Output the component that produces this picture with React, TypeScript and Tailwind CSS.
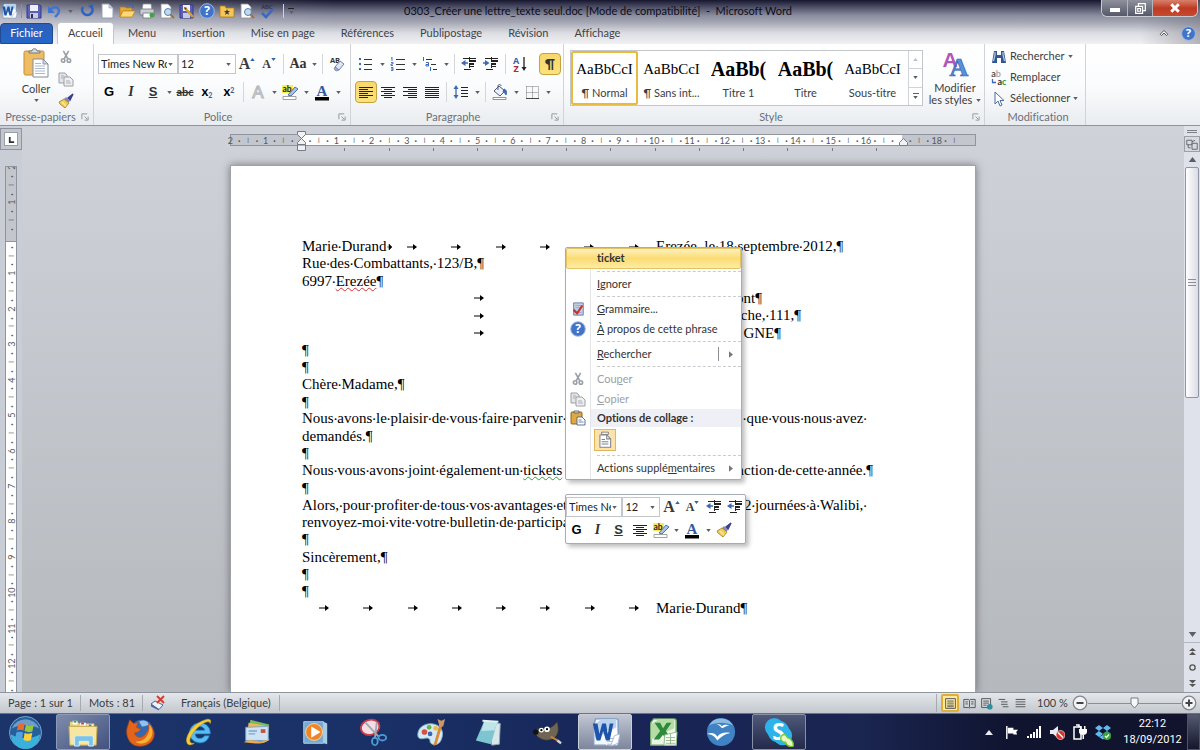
import React from "react";

type P = { children?: React.ReactNode; className?: string };

const Svg = ({ children, className = "size-4", vb = "0 0 16 16" }: P & { vb?: string }) => (
  <svg viewBox={vb} className={className + " shrink-0"} aria-hidden="true" fill="none">
    {children}
  </svg>
);

const Btn = ({ label, children, className = "w-[22px]" }: P & { label: string }) => (
  <button type="button" aria-label={label} title={label} className={"flex h-[22px] shrink-0 items-center justify-center " + className}>
    {children}
  </button>
);

const Caret = ({ className = "" }: P) => (
  <Svg vb="0 0 6 4" className={"h-[3px] w-[5px] " + className}>
    <path d="M0 0h6L3 4z" fill="#5b5f66" />
  </Svg>
);

const CaretBtn = ({ label }: { label: string }) => (
  <Btn label={label} className="w-[10px]">
    <Caret />
  </Btn>
);

const Sep = () => <span className="mx-[3px] h-5 w-px shrink-0 bg-[#d3d6da]" />;

/* ---------- icons ---------- */
const WordIcon = ({ className = "size-4" }: P) => (
  <Svg className={className} vb="0 0 32 32">
    <path d="M6 2h22a2 2 0 0 1 2 2v26H4V9z" fill="#f4f8fd" stroke="#7d9cc4" strokeWidth="1.5" />
    <path d="M4 9 12 2h16v9L4 24z" fill="#b9d2ee" />
    <path d="M17 14h12v16H17z" fill="#fff" />
    <path d="M18 23h9M18 26h9M18 29h7" stroke="#9ab4d6" />
    <path d="M3 7h5l2 11 3-11h4l2 11 2-11h4l-4 18h-4l-3-10-3 10H7z" fill="#1f55a8" />
    <path d="m26 20 6-2-2 10-8 3z" fill="#fff" stroke="#a7bad6" />
  </Svg>
);
const SaveIcon = () => (
  <Svg>
    <path d="M1 2h13l1 1v12H1z" fill="#5a5fb8" stroke="#34388a" />
    <path d="M4 2h8v6H4z" fill="#eef0fb" />
    <path d="M4 10h8v5H4z" fill="#c9cbd6" />
    <path d="M5 11h2v4H5z" fill="#2c2f66" />
  </Svg>
);
const UndoIcon = () => (
  <Svg>
    <path d="M2 3v7h7z" fill="#3f74cf" />
    <path d="M4 8c2-5 9-5 9 0 0 3-2 4-4 6" stroke="#3f74cf" strokeWidth="2.4" />
  </Svg>
);
const RedoIcon = () => (
  <Svg>
    <path d="M4 4a5.200 5.200 0 1 0 8-1" stroke="#2c62c4" strokeWidth="2.600" />
    <path d="M14 1v6L9 3z" fill="#2c62c4" />
  </Svg>
);
const DocIcon = () => (
  <Svg>
    <path d="M3 1h7l4 4v10H3z" fill="#fff" stroke="#8fa0b8" />
    <path d="M10 1v4h4z" fill="#c9d6e8" stroke="#8fa0b8" strokeWidth=".7" />
  </Svg>
);
const FolderIcon = () => (
  <Svg>
    <path d="M1 4h5l1 1h6v3H4l-3 6z" fill="#e3a93a" stroke="#b07a18" strokeWidth=".7" />
    <path d="M1 14 4 8h12l-3 6z" fill="#ffd876" stroke="#b98420" strokeWidth=".7" />
    <path d="M10 2c3-1 4 0 4 3" stroke="#3767b0" strokeWidth="1.200" />
  </Svg>
);
const PrintIcon = () => (
  <Svg>
    <path d="M4 1h8l1 6H3z" fill="#fff" stroke="#8a8f98" strokeWidth=".8" />
    <path d="M1 6h14v6H1z" fill="#c7ccd3" stroke="#6d737c" strokeWidth=".8" />
    <path d="M4 10h8v5H4z" fill="#fff" stroke="#6d737c" strokeWidth=".8" />
    <circle cx="13" cy="12" r="2.500" fill="#3fa53c" />
  </Svg>
);
const PreviewIcon = () => (
  <Svg>
    <path d="M2 1h7l3 3v11H2z" fill="#fff" stroke="#8a8f98" strokeWidth=".8" />
    <circle cx="9" cy="9" r="3.500" fill="#bcd9f5" stroke="#5f7fa8" />
    <path d="m11.500 11.500 3.500 3.500" stroke="#a9731f" strokeWidth="2" />
  </Svg>
);
const SaveEditIcon = () => (
  <Svg>
    <path d="M1 2h13v13H1z" fill="#5a5fb8" stroke="#34388a" />
    <path d="M4 2h7v6H4z" fill="#eef0fb" />
    <path d="M4 10h7v5H4z" fill="#c9cbd6" />
    <path d="m6 5 8 9" stroke="#d7a031" strokeWidth="2.500" />
    <path d="m5 4 3 1-2 2z" fill="#6d3d10" />
  </Svg>
);
const HelpIcon = ({ className = "size-4" }: P) => (
  <Svg className={className}>
    <circle cx="8" cy="8" r="7.300" fill="#3f74c8" stroke="#9db9e6" />
    <text x="8" y="12.200" fontSize="12" fontWeight="700" textAnchor="middle" fill="#fff" fontFamily="Open Sans, sans-serif">?</text>
  </Svg>
);
const FavFolderIcon = () => (
  <Svg>
    <path d="M1 3h5l1 2h8v9H1z" fill="#f4c65a" stroke="#b07a18" strokeWidth=".8" />
    <path d="m8 6 .8 2H11l-1.700 1.400L10 12l-2-1.500L6 12l.7-2.600L5 8h2.200z" fill="#3a3a3a" />
  </Svg>
);
const SpellIcon = () => (
  <Svg>
    <text x="8" y="6" fontSize="6" fontWeight="600" textAnchor="middle" fill="#2a2f45" fontFamily="Open Sans, sans-serif">ABC</text>
    <path d="m3 10 4 4 7-8" stroke="#3b68c6" strokeWidth="2.600" />
  </Svg>
);
const PasteBig = () => (
  <Svg vb="0 0 26 30" className="h-[30px] w-[26px]">
    <rect x="1" y="3" width="20" height="24" rx="1.500" fill="#f0bc62" stroke="#c18d3a" />
    <path d="M6 5V3h3c0-3 5-3 5 0h3v2z" fill="#d7dade" stroke="#6a6f77" strokeWidth=".9" />
    <path d="M10 11h10l5 5v13H10z" fill="#fff" stroke="#7f8c9f" />
    <path d="M20 11v5h5z" fill="#c9d5e6" stroke="#7f8c9f" strokeWidth=".8" />
    <path d="M12 18h10M12 20.500h10M12 23h10M12 25.500h10M12 15.500h6" stroke="#9fb0c8" strokeWidth=".9" />
  </Svg>
);
const PasteIcon = () => (
  <Svg>
    <rect x="1" y="2" width="11" height="12" rx="1" fill="#e0a83e" stroke="#7d5c1b" strokeWidth=".9" />
    <path d="M4 3V1h5v2z" fill="#d7dade" stroke="#555" strokeWidth=".8" />
    <path d="M7 7h5l3 3v5H7z" fill="#fff" stroke="#4d6590" strokeWidth=".9" />
    <path d="M8.500 10h3M8.500 12h5" stroke="#5878b0" strokeWidth=".9" />
  </Svg>
);
const PasteText = () => (
  <Svg className="size-[18px]">
    <path d="M5 3V1h6v2z" fill="#fff" stroke="#777" strokeWidth=".8" />
    <path d="M3.500 3.500h6l3.500 3.500v7.500H3.500z" fill="#fff" stroke="#7b8290" strokeWidth=".9" />
    <path d="M9.500 3.500V7H13" stroke="#7b8290" strokeWidth=".9" />
    <path d="M5 7.500h3M5 9.500h6M5 11.500h6" stroke="#7b8290" strokeWidth=".9" />
  </Svg>
);
const ScissorsIcon = () => (
  <Svg className="size-[14px]">
    <path d="m5 1 5 9M11 1 6 10" stroke="#9a9fa6" strokeWidth="1.800" />
    <circle cx="4.700" cy="12" r="2" stroke="#9a9fa6" strokeWidth="1.800" />
    <circle cx="11.300" cy="12" r="2" stroke="#9a9fa6" strokeWidth="1.800" />
  </Svg>
);
const CopyIcon = () => (
  <Svg>
    <path d="M1 2h6l2 2v8H1z" fill="#e4e5e8" stroke="#9b9fa6" />
    <path d="M6 6h6l3 3v6H6z" fill="#f0f0f2" stroke="#9b9fa6" />
    <path d="M3 5h3M3 7h2M8 10h4M8 12h5" stroke="#a9acb2" />
  </Svg>
);
const BrushIcon = () => (
  <Svg>
    <path d="m15 1-5 4 2 2z" fill="#3c3f8c" stroke="#3c3f8c" strokeWidth="1.500" />
    <path d="m8 4 4 4-2 2-4-4z" fill="#8489c4" />
    <path d="M6 6 1 9l1 2 5 4 4-5z" fill="#f2cc57" stroke="#a47a1c" strokeWidth=".8" />
    <path d="m4 9 4 4" stroke="#fbeaa8" strokeWidth="1.500" />
  </Svg>
);
const Letter = ({ t, up, className = "" }: { t: string; up: boolean; className?: string }) => (
  <span className="flex items-center font-['Liberation_Serif',serif] font-bold text-[#3a3a3a]">
    <span className={className}>{t}</span>
    <Svg vb="0 0 6 4" className="mb-2.5 h-[3px] w-[5px]">
      <path d={up ? "M0 4h6L3 0z" : "M0 0h6L3 4z"} fill="#3b62a8" />
    </Svg>
  </span>
);
const EraseIcon = () => (
  <Svg>
    <text x="6" y="7" fontSize="7.500" fontWeight="700" textAnchor="middle" fill="#333" fontFamily="Open Sans, sans-serif">AB</text>
    <path d="m6 11 5-6 4 3-5 6z" fill="#dfe6f2" stroke="#6e83ad" />
    <path d="m6 11 4 3-3 1-2-2z" fill="#9cb0d8" stroke="#6e83ad" strokeWidth=".8" />
  </Svg>
);
const HighlightIcon = () => (
  <Svg vb="0 0 18 17" className="h-[17px] w-[18px]">
    <path d="M1 1h11v8H1z" fill="#f5ee55" />
    <text x="6" y="8" fontSize="8.500" fontWeight="700" textAnchor="middle" fill="#222" fontFamily="Lato, sans-serif">ab</text>
    <path d="m7 11 7-8 3 2-7 7z" fill="#a9c2e8" stroke="#4467a5" strokeWidth=".9" />
    <path d="M2 12.500h13v3H2z" fill="#fff" stroke="#8d8d8d" strokeWidth=".8" />
  </Svg>
);
const FontColorIcon = () => (
  <Svg vb="0 0 16 17" className="h-[17px] w-4">
    <text x="8" y="11.500" fontSize="15" fontWeight="700" textAnchor="middle" fill="#35599c" fontFamily="Liberation Serif, serif">A</text>
    <path d="M1 13h14v3.500H1z" fill="#000" />
  </Svg>
);
const BulletsIcon = () => (
  <Svg>
    <path d="M1 3h2M1 8h2M1 13h2" stroke="#3b68b8" strokeWidth="2" />
    <path d="M6 3.500h8M6 8.500h8M6 13.500h8" stroke="#333" />
  </Svg>
);
const NumbersIcon = () => (
  <Svg>
    <path d="M2 1v4M1 2h1M1 6.500h2v1.500H1V9.500h2M1 11.500h2v3H1M1 13h2" stroke="#3b68b8" strokeWidth=".9" />
    <path d="M6 3.500h9M6 8.500h9M6 13.500h9" stroke="#333" />
  </Svg>
);
const MultiIcon = () => (
  <Svg>
    <path d="M1.500 1v4M4 6.500h2.500V10H4V8.500h2M8.500 11v4" stroke="#3b68b8" />
    <path d="M4 3.500h6M9 8.500h5M11 13.500h4" stroke="#333" />
  </Svg>
);
const IndentIcon = ({ out }: { out?: boolean }) => (
  <Svg>
    <path d="M2 2.500h13M8 10.500h5M3 13.500h7" stroke="#222" />
    <path d="M8.500 1v14" stroke="#222" strokeDasharray="1 1" />
    <path d="M8 5h7M8 8h5" stroke="#222" strokeWidth="2" />
    <path d={out ? "M4.500 4v6L0 7z" : "M2 4v6l4.500-3z"} fill="#3b68b8" />
    <path d={out ? "M3 7h4" : "M0 7h3"} stroke="#3b68b8" strokeWidth="1.500" />
  </Svg>
);
const SortIcon = () => (
  <Svg>
    <text x="4" y="7.500" fontSize="9" fontWeight="700" textAnchor="middle" fill="#3b62b0" fontFamily="Open Sans, sans-serif">A</text>
    <text x="4" y="15.500" fontSize="9" fontWeight="700" textAnchor="middle" fill="#a33030" fontFamily="Open Sans, sans-serif">Z</text>
    <path d="M12 1v11" stroke="#222" strokeWidth="1.300" />
    <path d="M9.500 11h5L12 15z" fill="#222" />
  </Svg>
);
const AlignIcon = ({ d }: { d: string }) => (
  <Svg>
    <path d={d} stroke="#222" strokeWidth="1.200" />
  </Svg>
);
const AL = "M1 3.500h14M1 5.500h9M1 7.500h14M1 9.500h9M1 11.500h14M1 13.500h9";
const AC = "M1 3.500h14M4 5.500h8M1 7.500h14M4 9.500h8M1 11.500h14M4 13.500h8";
const AR = "M1 3.500h14M6 5.500h9M1 7.500h14M6 9.500h9M1 11.500h14M6 13.500h9";
const AJ = "M1 3.500h14M1 5.500h14M1 7.500h14M1 9.500h14M1 11.500h14M1 13.500h14";
const SpacingIcon = () => (
  <Svg>
    <path d="M3 1 .5 5h5zM3 15 .5 11h5z" fill="#3b68b8" />
    <path d="M3 4v8" stroke="#3b68b8" strokeWidth="1.300" />
    <path d="M8 3.500h7M8 6.500h7M8 9.500h7M8 12.500h7" stroke="#222" />
  </Svg>
);
const BucketIcon = () => (
  <Svg>
    <path d="m2 7 5-5 6 5-5 5z" fill="#eef2f8" stroke="#4b5a78" />
    <path d="M6 6V2c0-2 3-2 3 0" stroke="#4b5a78" />
    <path d="M12 5c3 1 3 4 2 6-1-2-2-3-3-3z" fill="#3b68b8" stroke="#3b68b8" />
    <path d="M1 13.500h13v2H1z" fill="#fff" stroke="#777" strokeWidth=".8" />
  </Svg>
);
const BorderIcon = () => (
  <Svg>
    <path d="M2.500 2.500h12v11M2.500 2.500v11M8.500 2.500v11M2.500 8.500h12" stroke="#777" strokeDasharray="1 1" />
    <path d="M2 14.500h13" stroke="#444" />
  </Svg>
);
const StylesIcon = () => (
  <Svg vb="0 0 28 28" className="size-7">
    <text x="9" y="17" fontSize="21" fontWeight="700" textAnchor="middle" fill="#b057b8" fontFamily="Liberation Sans, sans-serif">A</text>
    <text x="18" y="26" fontSize="26" fontWeight="700" textAnchor="middle" fill="#5a92da" stroke="#2f62ae" strokeWidth=".7" fontFamily="Liberation Serif, serif">A</text>
  </Svg>
);
const BinocularsIcon = () => (
  <Svg>
    <path d="M3 2h3v4h4V2h3l2 12h-5V9H6v5H1z" fill="#33558f" />
    <path d="M4 3v3L2.500 12M12 3v3l1.500 6" stroke="#b4cbea" strokeWidth="1.200" />
  </Svg>
);
const ReplaceIcon = () => (
  <Svg>
    <text x="5" y="7" fontSize="9" fontWeight="700" textAnchor="middle" fill="#555" fontFamily="Lato, sans-serif">a<tspan fill="#aaa">b</tspan></text>
    <text x="11" y="15" fontSize="9" fontWeight="700" textAnchor="middle" fill="#333" fontFamily="Lato, sans-serif">a<tspan fill="#2e9a3b">c</tspan></text>
    <path d="M1.500 9v3.500H5" stroke="#3b68b8" strokeWidth="1.300" />
  </Svg>
);
const CursorIcon = () => (
  <Svg>
    <path d="M4 1v12l3-3 2 5 2-1-2-4.500h4z" fill="#fff" stroke="#4c6da4" />
  </Svg>
);
const GrammarIcon = () => (
  <Svg className="size-[14px]">
    <path d="M3 1h11v14H3z" fill="#c3cfe4" stroke="#5b78a8" />
    <path d="M5 4h7M5 6.500h7M5 12h7" stroke="#8ea6cc" />
    <path d="m3 9 4 4 6-9" stroke="#c9352c" strokeWidth="2.500" />
  </Svg>
);
const ProofIcon = () => (
  <Svg>
    <path d="M1 9 5 6l8 4-4 4.500z" fill="#eef2fa" stroke="#4467a5" />
    <path d="m1 9v2.500l8 4v-1z" fill="#4467a5" />
    <path d="m7 1 7 7M14 1 7 8" stroke="#d43a2b" strokeWidth="1.800" />
  </Svg>
);

/* ---------- shared controls ---------- */
const Combo = ({ label, value, className }: { label: string; value: string; className: string }) => (
  <label className={"relative flex h-5 items-center overflow-hidden border border-[#c3c7cd] bg-white " + className}>
    <span className="sr-only">{label}</span>
    <select defaultValue={value} className="w-full appearance-none whitespace-nowrap bg-transparent pr-2.5 pl-0.5 text-[11px] leading-4 text-[#222] outline-none">
      <option>{value}</option>
    </select>
    <Caret className="pointer-events-none absolute right-1" />
  </label>
);

const Group = ({ label, children, className = "", launcher = true }: P & { label: string; launcher?: boolean }) => (
  <section aria-label={label} className={"flex shrink-0 flex-col border-r border-[#d0d4d9] " + className}>
    <div className="flex h-[65px] gap-1">{children}</div>
    <div className="flex h-4 items-center">
      <span className="flex-1 text-center text-[#6b7079]">{label}</span>
      {launcher && (
        <button type="button" aria-label={"Options " + label} className="mr-1">
          <Svg vb="0 0 9 9" className="size-2">
            <path d="M1 7V1h6M4 4l3 3M8 4v4H4" stroke="#8a8f97" />
          </Svg>
        </button>
      )}
    </div>
  </section>
);

const GText = () => <b className="font-['Liberation_Sans',sans-serif] text-[13px] font-black text-black">G</b>;
const IText = () => <i className="font-['Liberation_Serif',serif] text-sm font-bold text-[#333]">I</i>;
const SText = () => <u className="font-['Liberation_Sans',sans-serif] text-[13px] font-bold text-[#333]">S</u>;

const styles: [string, string, string][] = [
  ["AaBbCcI", "¶ Normal", "text-[15px]"],
  ["AaBbCcI", "¶ Sans int...", "text-[15px]"],
  ["AaBb(", "Titre 1", "text-xl font-bold"],
  ["AaBb(", "Titre", "text-xl font-bold"],
  ["AaBbCcI", "Sous-titre", "text-[15px]"],
];

const Ribbon = () => (
  <div className="flex h-[82px] shrink-0 overflow-hidden border-b border-[#8f959e] bg-linear-to-b from-white via-[#fbfcfd] to-[#e9ecf0]">
    <Group label="Presse-papiers" className="w-[94px]">
      <button type="button" className="ml-3 flex w-12 flex-col items-center pt-1">
        <PasteBig />
        <span className="mt-[3px] leading-4">Coller</span>
        <Caret className="mt-0.5" />
      </button>
      <div className="flex flex-col pt-0.5">
        <Btn label="Couper" className="w-1"><ScissorsIcon /></Btn>
        <Btn label="Copier" className="w-1"><CopyIcon /></Btn>
        <Btn label="Reproduire la mise en forme" className="w-1"><BrushIcon /></Btn>
      </div>
    </Group>

    <Group label="Police" className="w-[257px] pl-1">
      <div className="flex flex-col gap-1.5 pt-[9px]">
        <div className="flex h-[22px] items-center">
          <Combo label="Police" value="Times New Roman" className="w-20" />
          <Combo label="Taille" value="12" className="w-[58px]" />
          <Btn label="Agrandir"><Letter t="A" up className="text-base" /></Btn>
          <Btn label="Réduire"><Letter t="A" up={false} className="text-xs" /></Btn>
          <Sep />
          <Btn label="Modifier la casse"><b className="font-['Liberation_Serif',serif] text-sm text-[#333]">Aa</b></Btn>
          <CaretBtn label="Options de casse" />
          <Sep />
          <Btn label="Effacer la mise en forme"><EraseIcon /></Btn>
        </div>
        <div className="flex h-[22px] items-center">
          <Btn label="Gras"><GText /></Btn>
          <Btn label="Italique"><IText /></Btn>
          <Btn label="Souligné"><SText /></Btn>
          <CaretBtn label="Options de soulignement" />
          <Btn label="Barré"><s className="text-[11px] font-bold text-[#333]">abc</s></Btn>
          <Btn label="Indice"><b className="text-[13px] text-black">x<sub className="text-[7px] text-[#35599c]">2</sub></b></Btn>
          <Btn label="Exposant"><b className="text-[13px] text-black">x<sup className="text-[7px] text-[#35599c]">2</sup></b></Btn>
          <Sep />
          <Btn label="Effets de texte">
            <Svg><text x="8" y="14" fontSize="17" textAnchor="middle" fill="#eee" stroke="#b3b6bb" fontFamily="Liberation Sans, sans-serif">A</text></Svg>
          </Btn>
          <CaretBtn label="Options d'effets" />
          <Btn label="Surlignage"><HighlightIcon /></Btn>
          <CaretBtn label="Couleurs de surlignage" />
          <Btn label="Couleur de police"><FontColorIcon /></Btn>
          <CaretBtn label="Couleurs de police" />
        </div>
      </div>
    </Group>

    <Group label="Paragraphe" className="w-[213px] pl-1">
      <div className="flex flex-col gap-1.5 pt-[9px]">
        <div className="flex h-[22px] items-center">
          <Btn label="Puces"><BulletsIcon /></Btn>
          <CaretBtn label="Options de puces" />
          <Btn label="Numérotation"><NumbersIcon /></Btn>
          <CaretBtn label="Options de numérotation" />
          <Btn label="Liste à plusieurs niveaux"><MultiIcon /></Btn>
          <CaretBtn label="Options de liste" />
          <Sep />
          <Btn label="Diminuer le retrait"><IndentIcon out /></Btn>
          <Btn label="Augmenter le retrait"><IndentIcon /></Btn>
          <Sep />
          <Btn label="Trier"><SortIcon /></Btn>
          <Btn label="Afficher tout" className="ml-2 w-[22px] rounded-sm border border-[#c9a13b] bg-linear-to-b from-[#f8d66c] to-[#fbe37c]">
            <b className="text-sm leading-none text-[#333]">¶</b>
          </Btn>
        </div>
        <div className="flex h-[22px] items-center">
          <Btn label="Aligner à gauche" className="w-[22px] rounded-sm border border-[#c9a13b] bg-linear-to-b from-[#f8d66c] to-[#fbe37c]"><AlignIcon d={AL} /></Btn>
          <Btn label="Centrer"><AlignIcon d={AC} /></Btn>
          <Btn label="Aligner à droite"><AlignIcon d={AR} /></Btn>
          <Btn label="Justifier"><AlignIcon d={AJ} /></Btn>
          <Sep />
          <Btn label="Interligne"><SpacingIcon /></Btn>
          <CaretBtn label="Options d'interligne" />
          <Sep />
          <Btn label="Trame de fond"><BucketIcon /></Btn>
          <CaretBtn label="Couleurs de trame" />
          <Btn label="Bordures"><BorderIcon /></Btn>
          <CaretBtn label="Options de bordures" />
        </div>
      </div>
    </Group>

    <Group label="Style" className="w-[421px] pl-1.5">
      <div className="mt-1.5 flex h-14 border border-[#c3c7cd] bg-white">
        {styles.map(([sample, name, size], i) => (
          <button
            key={name}
            type="button"
            className={
              "flex w-[67px] flex-col items-center overflow-hidden border-2 whitespace-nowrap " +
              (i === 0 ? "rounded-xs border-[#e8bb3c]" : "border-transparent")
            }
          >
            <span className={"h-8 max-w-[58px] overflow-hidden font-['Liberation_Serif',serif] leading-8 text-black " + size}>{sample}</span>
            <span className="leading-4">{name}</span>
          </button>
        ))}
        <div className="ml-0.5 flex w-3.5 flex-col border-l border-[#d0d4d9]">
          <button type="button" aria-label="Styles précédents" className="flex flex-1 items-center justify-center"><Caret className="rotate-180 opacity-40" /></button>
          <button type="button" aria-label="Styles suivants" className="flex flex-1 items-center justify-center border-y border-[#d0d4d9]"><Caret /></button>
          <button type="button" aria-label="Tous les styles" className="flex flex-1 flex-col items-center justify-center gap-0.5"><span className="h-px w-[6px] bg-[#5b5f66]" /><Caret /></button>
        </div>
      </div>
      <button type="button" className="flex w-14 flex-col items-center pt-1.5 leading-3">
        <StylesIcon />
        <span className="mt-1">Modifier</span>
        <span className="flex items-center gap-1 whitespace-nowrap">les styles <Caret /></span>
      </button>
    </Group>

    <Group label="Modification" launcher={false} className="w-[101px] pl-1.5">
      <div className="flex flex-col pt-0.5">
        {[
          { n: "Rechercher", i: <BinocularsIcon />, c: true },
          { n: "Remplacer", i: <ReplaceIcon />, c: false },
          { n: "Sélectionner", i: <CursorIcon />, c: true },
        ].map((r) => (
          <button key={r.n} type="button" className="flex h-[21px] items-center gap-[3px] whitespace-nowrap">
            {r.i}
            <span>{r.n}</span>
            {r.c && <Caret />}
          </button>
        ))}
      </div>
    </Group>
  </div>
);

const QuickAccess = () => (
  <div className="flex w-[404px] shrink-0 items-center gap-1 pl-px">
    <WordIcon />
    <span className="h-3.5 w-px bg-[#8b90a0]" />
    <button type="button" aria-label="Enregistrer"><SaveIcon /></button>
    <button type="button" aria-label="Annuler" className="flex items-center gap-1.5"><UndoIcon /><Caret className="mr-0.5" /></button>
    <button type="button" aria-label="Rétablir"><RedoIcon /></button>
    <button type="button" aria-label="Nouveau"><DocIcon /></button>
    <button type="button" aria-label="Ouvrir"><FolderIcon /></button>
    <button type="button" aria-label="Impression rapide"><PrintIcon /></button>
    <button type="button" aria-label="Aperçu"><PreviewIcon /></button>
    <button type="button" aria-label="Enregistrer sous"><SaveEditIcon /></button>
    <button type="button" aria-label="Aide"><HelpIcon /></button>
    <button type="button" aria-label="Favoris"><FavFolderIcon /></button>
    <button type="button" aria-label="Aperçu avant impression"><PreviewIcon /></button>
    <button type="button" aria-label="Grammaire et orthographe"><SpellIcon /></button>
    <span className="ml-1 h-3.5 w-px bg-[#cfd3dc]" />
    <span className="flex flex-col items-center gap-0.5"><span className="h-px w-[6px] bg-[#222]" /><Caret /></span>
  </div>
);

const tabs = ["Menu", "Insertion", "Mise en page", "Références", "Publipostage", "Révision", "Affichage"];

const Header = () => (
  <header className="shrink-0 bg-[linear-gradient(to_right,rgba(255,255,255,.32),rgba(255,255,255,0)_28%,rgba(255,255,255,0)_95%,rgba(120,120,130,.5)),linear-gradient(to_bottom,#17172f_0%,#4d4f66_16%,#8c8ea1_36%,#a3a5b2_50%,#dcdde2_75%,#f1f1f4_100%)]">
    <div className="flex h-[22px] items-center">
      <QuickAccess />
      <h1 className="whitespace-nowrap text-[11px] text-[#0d0d18]">0303_Créer une lettre_texte seul.doc [Mode de compatibilité]&nbsp; - &nbsp;Microsoft Word</h1>
      <div className="mr-0.5 ml-auto flex h-[17px] self-start overflow-hidden rounded-b-md border border-t-0 border-[#c9cbd2]">
        <button type="button" aria-label="Réduire" className="flex w-[26px] items-center justify-center border-r border-[#b2b4be] bg-linear-to-b from-[#8f919c] to-[#55586a]">
          <span className="mt-1 h-1 w-2.5 bg-white" />
        </button>
        <button type="button" aria-label="Restaurer" className="flex w-[25px] items-center justify-center border-r border-[#b2b4be] bg-linear-to-b from-[#8f919c] to-[#55586a]">
          <Svg className="size-[11px]"><path d="M5 4V1h10v10h-3M1 5h10v10H1zM4 8h4v4H4z" stroke="#fff" strokeWidth="1.800" /></Svg>
        </button>
        <button type="button" aria-label="Fermer" className="flex w-11 items-center justify-center bg-linear-to-b from-[#d9806c] via-[#bd3a22] to-[#c84a30]">
          <Svg className="size-3"><path d="m3 3 10 10M13 3 3 13" stroke="#fff" strokeWidth="4" /></Svg>
        </button>
      </div>
    </div>
    <nav className="flex h-[22px] items-end text-[#3f434b]">
      <button type="button" className="h-[21px] w-[53px] rounded-t-sm border border-[#1f4a94] bg-linear-to-b from-[#2b5fb8] to-[#2467c9] text-white">Fichier</button>
      <button type="button" className="ml-1 h-[22px] w-[57px] rounded-t-sm border border-b-0 border-[#c3c6cc] bg-white">Accueil</button>
      <div className="ml-[14px] flex h-[22px] gap-[26px]">
        {tabs.map((t) => (
          <button key={t} type="button" className="whitespace-nowrap">{t}</button>
        ))}
      </div>
      <div className="mr-1 ml-auto flex items-center gap-3 self-center">
        <button type="button" aria-label="Réduire le ruban">
          <Svg className="size-2.5"><path d="m2 10 6-6 6 6-2 2-4-4-4 4z" fill="#fff" stroke="#44474f" strokeWidth="1.500" /></Svg>
        </button>
        <button type="button" aria-label="Aide Word"><HelpIcon className="size-[15px]" /></button>
      </div>
    </nav>
  </header>
);

/* ---------- rulers ---------- */
const mark = (i: number, zero: number, hidden: number[]) => {
  if (i % 4 === 0) {
    const n = Math.abs(i / 4 - zero);
    return hidden.includes(i / 4) ? "" : String(n);
  }
  return i % 4 === 2 ? "|" : "·";
};
const Slot = ({ t, v }: { t: string; v?: boolean }) => (
  <span className={"flex min-h-0 min-w-0 flex-1 items-center justify-center leading-none " + (v ? "[writing-mode:vertical-rl] rotate-180 " : "") + (t === "|" ? "text-[6px] font-bold" : t === "·" ? "text-[9px] font-bold" : "text-[9px]")}>
    {t}
  </span>
);
const HRuler = () => (
  <div className="relative mx-auto w-[746px] text-[#55585e]">
    <div className="h-3 border border-[#8f959e] bg-[linear-gradient(to_right,#c3c7cd_9.6%,#fff_9.6%,#fff_90.2%,#c3c7cd_90.2%)]">
      <div className="-mr-0.5 -ml-[5px] flex h-full">
        {Array.from({ length: 85 }, (_, i) => (
          <Slot key={i} t={i > 82 ? "" : mark(i, 2, [2, 19])} />
        ))}
      </div>
    </div>
    <div className="mt-0.5 ml-[71px] flex h-[3px] w-[576px]">
      {Array.from({ length: 13 }, (_, i) => (
        <span key={i} className="flex-1 border-r border-[#777b82]" />
      ))}
    </div>
    <Svg vb="0 0 9 20" className="absolute -top-[3px] left-[67px] h-5 w-[9px]">
      <path d="M.5.500h8v3l-4 4-4-4zM4.500 7.500l4 4v2h-8v-2zM.5 14h8v5.500h-8z" fill="#f1f2f4" stroke="#777b82" />
    </Svg>
    <Svg vb="0 0 9 8" className="absolute top-[4px] left-[669px] h-2 w-[9px]">
      <path d="m4.500.500 4 4v3h-8v-3z" fill="#f1f2f4" stroke="#777b82" />
    </Svg>
  </div>
);
const VRuler = () => (
  <div className="h-[540px] w-3 overflow-hidden border border-[#8f959e] bg-[linear-gradient(to_bottom,#c3c7cd_74px,#8f959e_74px,#8f959e_75px,#fff_75px)] text-[#55585e]">
    <div className="-mt-1 flex h-[540px] flex-col">
      {Array.from({ length: 61 }, (_, i) => (
        <Slot key={i} v t={mark(i, 2, [2])} />
      ))}
    </div>
  </div>
);

/* ---------- letter ---------- */
const T = ({ s }: { s: string }) => (
  <span>
    {s.split(/(·)/).map((part, i) => (part === "·" ? <span key={i} className="text-[11px] font-bold">·</span> : part))}
  </span>
);
const Arrow = () => (
  <span className="flex flex-1 items-center justify-center">
    <Svg vb="0 0 10 6" className="h-[6px] w-2.5">
      <path d="M0 3h7" stroke="#000" />
      <path d="M6 0v6l4-3z" fill="#000" />
    </Svg>
  </span>
);
const Line = ({ children, className = "" }: P) => <p className={"flex min-h-0 items-center whitespace-pre " + className}>{children}</p>;
const Blank = () => <Line>¶</Line>;

const Letterbody = () => (
  <div className="grid h-[379px] auto-rows-fr font-['Liberation_Serif',serif] text-[15px] leading-4 text-black">
    <Line>
      <span className="flex w-[354px] items-center">
        <span className="flex w-[88px] items-center">
          <T s="Marie·Durand" />
          <Svg vb="0 0 5 6" className="h-[6px] w-[5px]"><path d="M0 3h2M2 0l3 3-3 3z" fill="#000" stroke="#000" strokeWidth=".5" /></Svg>
        </span>
        {Array.from({ length: 6 }, (_, i) => <Arrow key={i} />)}
      </span>
      <T s="Erezée, le·18·septembre·2012,¶" />
    </Line>
    <Line><T s="Rue·des·Combattants,·123/B,¶" /></Line>
    <Line><T s="6997·" /><span className="underline decoration-[#d03030] decoration-wavy decoration-1 underline-offset-1">Erezée</span>¶</Line>
    <Line className="w-[460px]"><span className="flex w-[354px]"><Arrow /></span><span className="ml-auto">ont¶</span></Line>
    <Line className="w-[499px]"><span className="flex w-[354px]"><Arrow /></span><span className="ml-auto"><T s="che,·111,¶" /></span></Line>
    <Line className="w-[479px]"><span className="flex w-[354px]"><Arrow /></span><span className="ml-auto">GNE¶</span></Line>
    <Blank />
    <Blank />
    <Line><T s="Chère·Madame,¶" /></Line>
    <Blank />
    <Line className="w-[565px] justify-between"><T s="Nous·avons·le·plaisir·de·vous·faire·parvenir·" /><T s="·que·vous·nous·avez·" /></Line>
    <Line>demandés.¶</Line>
    <Blank />
    <Line className="w-[571px] justify-between">
      <span><T s="Nous·vous·avons·joint·également·un·" /><span className="underline decoration-[#2f9a3b] decoration-wavy decoration-1 underline-offset-1">tickets</span></span>
      <T s="action·de·cette·année.¶" />
    </Line>
    <Blank />
    <Line className="w-[565px] justify-between"><T s="Alors,·pour·profiter·de·tous·vos·avantages·et" /><T s="2·journées·à·Walibi,·" /></Line>
    <Line><T s="renvoyez-moi·vite·votre·bulletin·de·participa" /></Line>
    <Blank />
    <Line>Sincèrement,¶</Line>
    <Blank />
    <Blank />
    <Line>
      <span className="flex w-[354px]">{Array.from({ length: 8 }, (_, i) => <Arrow key={i} />)}</span>
      <T s="Marie·Durand¶" />
    </Line>
  </div>
);

/* ---------- context menu ---------- */
const Item = ({ icon, children, className = "text-[#333]" }: P & { icon?: React.ReactNode }) => (
  <button type="button" role="menuitem" className={"flex h-5 w-full items-center text-left whitespace-nowrap " + className}>
    <span className="flex w-6 shrink-0 justify-center">{icon}</span>
    <span className="flex flex-1 items-center pl-[7px]">{children}</span>
  </button>
);
const MenuSep = () => <div className="ml-[31px] flex h-[5px] items-center"><span className="w-full border-t border-dashed border-[#c9cbd0]" /></div>;
const Right = () => <Svg vb="0 0 5 8" className="mr-2 ml-auto h-[7px] w-1"><path d="M0 0v8l5-4z" fill="#777" /></Svg>;

const ContextMenu = () => (
  <div role="menu" className="absolute top-[81px] left-[334px] w-[177px] rounded-xs border border-[#a7abb3] bg-[linear-gradient(to_right,#fff_24px,#e2e4e8_24px,#e2e4e8_25px,#fff_25px)] pb-px text-[11px] shadow-[3px_3px_4px_rgba(0,0,0,.25)]">
    <button type="button" role="menuitem" className="flex h-[21px] w-full items-center rounded-xs border border-[#e5c365] bg-linear-to-b from-[#fdf0b8] via-[#fbdc74] to-[#fdeca4] pl-[30px] text-left font-bold text-[#333]">ticket</button>
    <MenuSep />
    <Item><span><u>I</u>gnorer</span></Item>
    <MenuSep />
    <Item icon={<GrammarIcon />}><span><u>G</u>rammaire...</span></Item>
    <Item icon={<HelpIcon />}><span><u>À</u> propos de cette phrase</span></Item>
    <MenuSep />
    <Item><span><u>R</u>echercher</span><span className="ml-auto h-3.5 w-px bg-[#8a8d94]" /><span className="flex w-[22px]"><Right /></span></Item>
    <MenuSep />
    <Item className="text-[#9c9fa5]" icon={<ScissorsIcon />}><span>Cou<u>p</u>er</span></Item>
    <Item className="text-[#9c9fa5]" icon={<CopyIcon />}><span><u>C</u>opier</span></Item>
    <div className="flex h-[18px] items-center">
      <span className="flex w-6 justify-center"><PasteIcon /></span>
      <span className="ml-px flex h-full flex-1 items-center bg-[#eff0f5] pl-[6px] font-bold text-[#333]">Options de collage :</span>
    </div>
    <div className="flex h-[26px] items-center pl-7">
      <button type="button" aria-label="Conserver uniquement le texte" className="flex size-[22px] items-center justify-center border border-[#e2b65f] bg-[#fbe3ab]"><PasteText /></button>
    </div>
    <MenuSep />
    <Item><span>Actions supplé<u>m</u>entaires</span><Right /></Item>
  </div>
);

const MiniToolbar = () => (
  <div role="toolbar" aria-label="Mise en forme" className="absolute top-[328px] left-[334px] w-[181px] rounded-xs border border-[#a7abb3] bg-white pt-px pb-px shadow-[3px_3px_4px_rgba(0,0,0,.25)]">
    <div className="flex h-[22px] items-center">
      <Combo label="Police" value="Times New Roman" className="w-[57px]" />
      <Combo label="Taille" value="12" className="mr-px w-[38px]" />
      <Btn label="Agrandir" className="w-[21px]"><Letter t="A" up className="text-base" /></Btn>
      <Btn label="Réduire" className="w-[21px]"><Letter t="A" up={false} className="text-xs" /></Btn>
      <Btn label="Diminuer le retrait" className="w-[21px]"><IndentIcon out /></Btn>
      <Btn label="Augmenter le retrait" className="w-[21px]"><IndentIcon out /></Btn>
    </div>
    <div className="flex h-6 items-center">
      <Btn label="Gras" className="w-[21px]"><GText /></Btn>
      <Btn label="Italique" className="w-[21px]"><IText /></Btn>
      <Btn label="Souligné" className="w-[21px]"><SText /></Btn>
      <Btn label="Centrer" className="w-[21px]"><AlignIcon d={AC} /></Btn>
      <Btn label="Surlignage" className="w-[21px]"><HighlightIcon /></Btn>
      <CaretBtn label="Couleurs de surlignage" />
      <Btn label="Couleur de police"><FontColorIcon /></Btn>
      <CaretBtn label="Couleurs de police" />
      <Btn label="Reproduire la mise en forme"><BrushIcon /></Btn>
    </div>
  </div>
);

const Workspace = () => (
  <main className="flex min-h-0 flex-1 overflow-hidden bg-linear-to-b from-[#cfd3d9] to-[#b5b8bd]">
    <div className="flex w-[22px] shrink-0 flex-col items-center bg-[#c9cdd6]">
      <button type="button" aria-label="Type de tabulation" className="mt-0.5 flex h-[22px] w-[22px] shrink-0 items-center justify-center border border-[#8f959e] bg-[#c3c7cd]">
        <span className="flex size-[14px] items-center justify-center border border-[#9aa0a8] bg-white">
          <Svg className="size-[7px]" vb="0 0 8 8"><path d="M2 1v6h5" stroke="#333" strokeWidth="2" /></Svg>
        </span>
      </button>
      <div className="mt-4 min-h-0 flex-1 overflow-hidden"><VRuler /></div>
    </div>
    <div className="flex min-w-0 flex-1 flex-col pt-2">
      <HRuler />
      <article className="relative mx-auto mt-[14px] min-h-0 w-[746px] flex-1 border border-b-0 border-[#9fa3a9] bg-white pt-[72px] pl-[71px] shadow-[0_0_8px_rgba(60,62,68,.6)]">
        <Letterbody />
        <ContextMenu />
        <MiniToolbar />
      </article>
    </div>
    <div className="flex w-4 shrink-0 flex-col items-center bg-[#dfe2ea]">
      <span className="mt-1 h-[3px] w-2.5 border-y border-[#7b7f86]" />
      <button type="button" aria-label="Règle" className="mt-[3px] flex size-4 shrink-0 items-center justify-center border border-[#9aa0a8] bg-[#d7dae0]">
        <Svg className="size-3"><path d="M1 3h7v6H1zM8 7h7v8H8zM3 9v4h3M8 5l4-2" stroke="#666a72" strokeWidth="1.300" /></Svg>
      </button>
      <button type="button" aria-label="Défiler vers le haut" className="flex h-[15px] shrink-0 items-center"><Caret className="h-[5px] w-[9px] rotate-180" /></button>
      <span className="flex h-[231px] w-3.5 shrink-0 items-center justify-center rounded-xs border border-[#8f95a2] bg-linear-to-r from-white to-[#d9dce4]">
        <span className="h-[7px] w-2 border-y border-[#8a8f98] bg-[linear-gradient(to_bottom,transparent_2px,#8a8f98_2px,#8a8f98_3px,transparent_3px)]" />
      </span>
      <button type="button" aria-label="Défiler vers le bas" className="mt-auto flex h-[15px] shrink-0 items-center"><Caret className="h-[5px] w-[9px]" /></button>
      <div className="flex h-[50px] w-full shrink-0 flex-col items-center justify-around border-t border-[#b2b6be]">
        <button type="button" aria-label="Page précédente"><Svg vb="0 0 8 8" className="size-[7px]"><path d="m4 0 4 3.500H0zM4 4l4 4H0z" fill="#555" /></Svg></button>
        <button type="button" aria-label="Sélectionner l'objet"><Svg vb="0 0 8 8" className="size-[7px]"><circle cx="4" cy="4" r="3" stroke="#555" strokeWidth="1.500" /></Svg></button>
        <button type="button" aria-label="Page suivante"><Svg vb="0 0 8 8" className="size-[7px]"><path d="m4 8 4-3.500H0zM4 4l4-4H0z" fill="#555" /></Svg></button>
      </div>
    </div>
  </main>
);

const StatusBar = () => (
  <footer className="flex h-[21px] shrink-0 items-center border-t border-[#8f959e] bg-linear-to-b from-[#e4e7eb] to-[#c3c8ce] text-[#3a3d43]">
    <span className="w-20 pl-2">Page : 1 sur 1</span>
    <span className="h-4 w-px bg-[#a6abb2]" />
    <span className="w-[61px] pl-2">Mots : 81</span>
    <span className="h-4 w-px bg-[#a6abb2]" />
    <span className="flex w-[30px] justify-center"><ProofIcon /></span>
    <span className="pr-2 pl-2">Français (Belgique)</span>
    <span className="h-4 w-px bg-[#a6abb2]" />
    <div className="ml-auto flex items-center gap-[3px] border-l border-[#a6abb2] pl-1">
      {[
        "M2 2h12v12H2zM4 5h8M4 7.500h8M4 10h8M4 12h8",
        "M1 3h6l1 1 1-1h6v10H9l-1 1-1-1H1zM8 4v9M3 6h3M3 8.500h3M10 6h3M10 8.500h3",
        "M2 2h11v11H2zM4 5h7M4 7.500h7M4 10h4",
        "M2 3h8M5 6h8M5 9h8M7 12h7",
        "M2 3h12M2 6h12M2 9h12M2 12h12",
      ].map((d, i) => (
        <button key={i} type="button" aria-label={["Page", "Lecture plein écran", "Web", "Plan", "Brouillon"][i]} className={"flex items-center justify-center " + (i === 0 ? "size-[18px] rounded-xs border-2 border-[#dfae32] bg-[#fdeaa0]" : "size-[14px]")}>
          <Svg className="size-[13px]">
            <path d={d} stroke="#55585e" strokeWidth="1.200" />
            {i === 2 && <circle cx="12" cy="12" r="3.500" fill="#2f8fa0" />}
          </Svg>
        </button>
      ))}
    </div>
    <span className="ml-2.5 w-[35px] whitespace-nowrap">100 %</span>
    <button type="button" aria-label="Zoom arrière" className="flex">
      <Svg className="size-4"><circle cx="8" cy="8" r="6.800" fill="#f3f4f6" stroke="#83878e" strokeWidth="1.300" /><path d="M4.500 8h7" stroke="#444" strokeWidth="2" /></Svg>
    </button>
    <label className="relative flex h-4 w-[93px] items-center justify-center">
      <span className="sr-only">Zoom</span>
      <input type="range" defaultValue={50} className="absolute inset-0 w-full opacity-0" />
      <span className="h-px w-full bg-[#8a8e95]" />
      <Svg vb="0 0 9 12" className="absolute h-3 w-[9px]"><path d="M1 1h7v6l-3.500 4L1 7z" fill="#f6f7f8" stroke="#777b82" /></Svg>
    </label>
    <button type="button" aria-label="Zoom avant" className="mr-[3px] flex">
      <Svg className="size-4"><circle cx="8" cy="8" r="6.800" fill="#f3f4f6" stroke="#83878e" strokeWidth="1.300" /><path d="M4.500 8h7M8 4.500v7" stroke="#444" strokeWidth="2" /></Svg>
    </button>
  </footer>
);

/* ---------- taskbar ---------- */
const big = "size-[30px]";
const apps: { n: string; on?: string; i: React.ReactNode }[] = [
  {
    n: "Explorateur", on: "border-[#8c9ab8] bg-linear-to-br from-[#7f8cab] to-[#42527f]",
    i: <Svg vb="0 0 32 32" className={big}><path d="M2 5h8l2 2h16v20H2z" fill="#e8cf7c" /><path d="M5 4h5v4H5zM13 6h6v3h-6zM21 8h6v3h-6z" fill="#fff" /><path d="M6 4h3v2H6z" fill="#38a838" /><path d="M14 6h3v2h-3z" fill="#d23c2c" /><path d="M22 8h3v2h-3z" fill="#3a78c8" /><path d="M1 10h30l-1 20H2z" fill="#f7e6a2" stroke="#c7a94e" /><path d="M7 31v-9q0-2 2-2h16q2 0 2 2v9h-5v-5H12v5z" fill="#7cc3e8" stroke="#d9f1fb" /></Svg>,
  },
  {
    n: "Firefox",
    i: <Svg vb="0 0 32 32" className={big}><circle cx="17" cy="15" r="12" fill="#3468b4" /><path d="M14 5c6-3 10 0 11 4-4-1-5 2-8 1z" fill="#8fc1ea" /><path d="M2 9 4 3l4 4 5-1-2 5 5 2-3 3-4 1c1 5 8 6 11 2s5-6 4-12c8 6 8 16 1 21S8 32 4 26 0 14 2 9z" fill="#e2651c" stroke="#b8430f" strokeWidth=".7" /><path d="M25 8c5 6 4 14-2 18-4 3-10 3-13 0 8 1 16-5 15-18z" fill="#f8b133" /></Svg>,
  },
  {
    n: "Internet Explorer",
    i: <Svg vb="0 0 32 32" className={big}><path d="M27 20h-5c-2 4-10 4-10-2h16C29 4 9 2 6 15c-2 13 17 18 21 5zM12 14c1-5 9-5 10 0z" fill="#58bdf0" stroke="#1c7fc4" strokeWidth=".8" /><path d="M28 7c2-5-2-6-8-3C10 8 1 20 3 27c1 4 5 3 8 1-8 1-5-8 3-16 6-6 13-9 14-5z" fill="#f5cf3a" stroke="#c79a18" strokeWidth=".6" /></Svg>,
  },
  {
    n: "Windows Live Mail",
    i: <Svg vb="0 0 32 32" className={big}><path d="m9 3 20 5-4 16L6 20z" fill="#7cb95c" /><path d="m7 6 22 4-3 16-21-3z" fill="#f2b455" /><path d="m4 11 24-1v15H4z" fill="#cde3f4" stroke="#7ba5c9" /><path d="M20 13h5v4h-5z" fill="#c85042" /><path d="M7 15h9M7 18h7" stroke="#7ba5c9" strokeWidth="1.500" /><path d="M2 27c8-6 16 3 28-4-6 8-17 5-28 4z" fill="#eda94c" /></Svg>,
  },
  {
    n: "Lecteur multimédia",
    i: <Svg vb="0 0 32 32" className={big}><path d="M4 5h21v23H4z" fill="#76a9d2" stroke="#b4d4ea" /><path d="m25 5 4 2v22l-4-1z" fill="#a6cde6" /><circle cx="15" cy="16" r="9" fill="#ef8526" stroke="#fbd6a9" /><path d="m12 10 10 6-10 6z" fill="#fff" /></Svg>,
  },
  {
    n: "Outil Capture",
    i: <Svg vb="0 0 32 32" className={big}><ellipse cx="13" cy="11" rx="10" ry="8" fill="#f3dfe3" stroke="#c83c4c" strokeWidth="2" transform="rotate(-15 13 11)" /><path d="m8 6 14 15M20 6l-2 17" stroke="#9fa8b2" strokeWidth="2" /><ellipse cx="18" cy="26" rx="3" ry="4" stroke="#4b9cd8" strokeWidth="2" /><ellipse cx="26" cy="22" rx="4" ry="3" stroke="#4b9cd8" strokeWidth="2" /></Svg>,
  },
  {
    n: "Paint",
    i: <Svg vb="0 0 32 32" className={big}><path d="M2 20C1 10 13 4 23 9c7 4 6 12 3 17s-11 4-11 0-3-4-7-3-6-1-6-3z" fill="#d5e9f4" stroke="#7fb1cf" /><circle cx="9" cy="16" r="3" fill="#d9503f" /><circle cx="14" cy="11" r="2.500" fill="#67b244" /><circle cx="21" cy="12" r="2.500" fill="#f0b93c" /><circle cx="15" cy="18" r="2.500" fill="#3a67b4" /><path d="m19 29 6-21 3 1-6 20-3 2z" fill="#dd8a35" /><path d="m23 2 4 2 4-2-2 8h-4z" fill="#c9976b" /></Svg>,
  },
  {
    n: "Bloc-notes",
    i: <Svg vb="0 0 32 32" className={big}><path d="m13 4 15 3-1 22-8 1z" fill="#d8e7ea" stroke="#8fa5ab" /><path d="m11 4 14 1-7 24L2 25z" fill="#7fc5cf" /><path d="m11 4 14 1-3 9-14 1z" fill="#bfe5ea" /><path d="m9 4 17 1" stroke="#e9f1f2" strokeWidth="2" /></Svg>,
  },
  {
    n: "GIMP",
    i: <Svg vb="0 0 32 32" className={big}><path d="M3 15c3-4 8-2 12-2 5-1 9-4 12-8 1 6 2 10-1 15-3 5-12 6-17 3-4-2-6-5-6-8z" fill="#6f6552" stroke="#3b352a" strokeWidth=".7" /><circle cx="4" cy="16" r="3" fill="#15130f" /><circle cx="10" cy="14" r="2.600" fill="#fff" /><circle cx="16" cy="13" r="3" fill="#fff" /><circle cx="10" cy="14" r="1.200" fill="#000" /><circle cx="16" cy="13" r="1.200" fill="#000" /><path d="m20 21 9 5" stroke="#c9823a" strokeWidth="2" /><path d="m27 25 4 3" stroke="#d3d8de" strokeWidth="2.500" /></Svg>,
  },
  { n: "Word", on: "border-[#c9ced9] bg-linear-to-b from-[#c1c6d2] to-[#7d869c]", i: <WordIcon className={big} /> },
  {
    n: "Excel",
    i: <Svg vb="0 0 32 32" className={big}><path d="M6 2h22a2 2 0 0 1 2 2v26H3V6z" fill="#eaf5e6" stroke="#74aa68" strokeWidth="1.500" /><path d="M3 8 12 2h16v10L3 24z" fill="#b5dba6" /><path d="M7 6h6l3 6 4-6h5l-6 9 6 9h-6l-3-5-4 5H6l7-9z" fill="#2c8a3a" /><path d="m18 19 13-3-1 14H17z" fill="#fff" stroke="#8fba86" /><path d="M19 22h10M19 25h10M19 28h10M24 18v11" stroke="#8fba86" /></Svg>,
  },
  {
    n: "OpenOffice",
    i: <Svg vb="0 0 32 32" className={big}><circle cx="16" cy="16" r="15" fill="#3f83c4" /><path d="M3 9a15 15 0 0 1 26 0c-7-4-18-4-26 0z" fill="#8dbce2" /><path d="M11 8c3-1 5 0 6 2 2-2 5-2 8-1-3 0-5 2-8 3-2-2-3-4-6-4zM1 18c5-2 9-1 11 3 3-4 8-5 14-4-6 1-10 4-14 8-2-4-6-7-11-7z" fill="#fff" /></Svg>,
  },
  {
    n: "Skype", on: "border-[#8890a6] bg-linear-to-b from-[#50597a] to-[#232a4c]",
    i: <Svg vb="0 0 32 32" className={big}><circle cx="11" cy="11" r="10" fill="#2cb3ea" /><circle cx="20" cy="20" r="10" fill="#2cb3ea" /><circle cx="15.500" cy="15.500" r="11.500" fill="#2cb3ea" /><text x="15.500" y="24" fontSize="24" fontWeight="700" textAnchor="middle" fill="#fff" fontFamily="Open Sans, sans-serif">S</text><path d="M19 20c3-3 5 0 6 2 4 1 7 5 6 9-4 1-7-1-8-4-4 0-7-4-4-7z" fill="#e8f9c9" stroke="#7cc832" strokeWidth="1.500" /></Svg>,
  },
];

const Taskbar = () => (
  <div className="flex h-[37px] shrink-0 items-stretch border-t border-[#6a728a] bg-[linear-gradient(to_right,#1b3469,#1a3168_30%,#182455_55%,#1a2550_72%,#101430_84%,#12142c)]">
    <button type="button" aria-label="Démarrer" className="flex w-14 items-center pl-2">
      <Svg vb="0 0 36 36" className="size-[35px]">
        <circle cx="18" cy="18" r="16.500" fill="#24609c" stroke="#7fa6cc" />
        <path d="M3 20a15 15 0 0 0 30 0c-9 5-21 5-30 0z" fill="#39b1dc" />
        <path d="M4 14a15 15 0 0 1 28 0c-8-5-20-5-28 0z" fill="#8fb6d8" opacity=".7" />
        <path d="M11 9c2-1 4-1 6 0l-1 7c-2-1-5-1-7 0z" fill="#ea6a2f" />
        <path d="M18.500 10c3 1 5 1 8 0l-1.500 7c-3 1-5 1-8-.500z" fill="#93c83e" />
        <path d="M8.500 18c2-1 5-1 7 0l-1 7c-3-1-5-1-7 0z" fill="#4fa3e0" />
        <path d="M17 18.500c2 1 5 1 8 0L23.500 26c-3 1-5 1-7.500-.500z" fill="#fbcf3b" />
      </Svg>
    </button>
    <div className="flex gap-1">
      {apps.map((a) => (
        <button key={a.n} type="button" aria-label={a.n} className={"flex w-[54px] items-center justify-center rounded-xs border " + (a.on ?? "border-transparent")}>
          {a.i}
        </button>
      ))}
    </div>
    <div className="ml-auto flex items-center gap-[7px] text-white">
      <button type="button" aria-label="Icônes masquées" className="mr-1"><Svg vb="0 0 8 5" className="h-[5px] w-2"><path d="m4 0 4 5H0z" fill="#e8eaf0" /></Svg></button>
      <Svg className="size-[15px]"><path d="M3 1v14" stroke="#fff" strokeWidth="1.500" /><path d="M4 3h6v6H4zM10 5h5l-2 2.500 1 2.500h-4z" fill="#fff" /></Svg>
      <Svg><path d="M2 12v2M5 10v4M8 8v6M11 5v9M14 2v12" stroke="#fff" strokeWidth="2" /></Svg>
      <Svg><path d="M1 6h3l5-4v12l-5-4H1z" fill="#e9ebf0" /><circle cx="11.500" cy="11" r="4.500" fill="#d8322c" stroke="#fff" strokeWidth=".6" /><path d="m9 8.500 5 5" stroke="#fff" strokeWidth="1.500" /></Svg>
      <Svg><path d="M2 3h7v12H2zM4 1h3v2" stroke="#fff" strokeWidth="1.500" /><path d="M7 5h8v3c0 2-2 3-4 3S7 10 7 8zM8 2h1.500v3H8zM12 2h1.500v3H12zM10.500 11h1.500v4h-1.500z" fill="#fff" /></Svg>
      <Svg><path d="m4 1 4 3-4 3-4-3zM12 1l4 3-4 3-4-3zM4 7l4 3-4 3-4-3zM12 7l4 3-4 3-4-3z" fill="#63b9ee" /><path d="m8 11 4 2-4 2.500L4 13z" fill="#63b9ee" /><circle cx="12" cy="12" r="4" fill="#38a53c" /><path d="m10 12 1.500 1.500 2.500-3" stroke="#fff" strokeWidth="1.300" /></Svg>
      <time className="w-[69px] text-center font-['Roboto',sans-serif] text-[11px] leading-4">22:12<br />18/09/2012</time>
    </div>
    <button type="button" aria-label="Afficher le bureau" className="w-[13px] shrink-0 border border-[#4d5268] bg-linear-to-b from-[#555a70] to-[#15172c]" />
  </div>
);

export default function App() {
  return (
    <div className="flex h-screen min-h-[600px] flex-col overflow-hidden font-['Lato','Open_Sans',sans-serif] text-[11px] text-[#3a3d43] [font-variant-ligatures:none]">
      <Header />
      <Ribbon />
      <Workspace />
      <StatusBar />
      <Taskbar />
    </div>
  );
}
